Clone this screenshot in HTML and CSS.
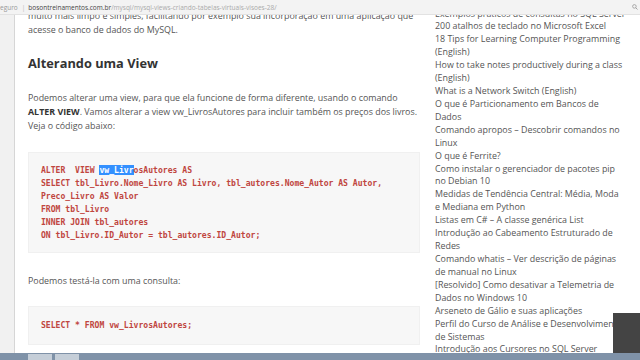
FILE: index.html
```html
<!DOCTYPE html>
<html lang="pt-BR">
<head>
<meta charset="utf-8">
<title>MySQL Views</title>
<link rel="stylesheet" href="styles.css">
</head>
<body>
<div class="addr">
  <span class="sec">eguro</span><span class="sep">|</span><span class="dom">bosontreinamentos.com.br</span><span class="path">/mysql/mysql-views-criando-tabelas-virtuais-visoes-28/</span>
  <svg class="search" width="6" height="6" viewBox="0 0 6 6"><circle cx="2.4" cy="2.4" r="1.8" fill="none" stroke="#999" stroke-width="0.8"/><path d="M3.7 3.7 L5.5 5.5" stroke="#999" stroke-width="0.9"/></svg>
</div>
<div class="page">
  <div class="gutter"></div>
  <main class="article">
    <p class="first">muito mais limpo e simples, facilitando por exemplo sua incorporação em uma aplicação que acesse o banco de dados do MySQL.</p>
    <h2>Alterando uma View</h2>
    <p class="intro">Podemos alterar uma view, para que ela funcione de forma diferente, usando o comando <b>ALTER VIEW</b>. Vamos alterar a view vw_LivrosAutores para incluir também os preços dos livros. Veja o código abaixo:</p>
    <pre class="code">ALTER  VIEW <span class="sel">vw_Livr</span>osAutores AS
SELECT tbl_Livro.Nome_Livro AS Livro, tbl_autores.Nome_Autor AS Autor,
Preco_Livro AS Valor
FROM tbl_Livro
INNER JOIN tbl_autores
ON tbl_Livro.ID_Autor = tbl_autores.ID_Autor;</pre>
    <p class="test">Podemos testá-la com uma consulta:</p>
    <pre class="code short">SELECT * FROM vw_LivrosAutores;</pre>
  </main>
  <aside class="side">
    <ul>
      <li>Exemplos práticos de consultas no SQL Server</li>
      <li>200 atalhos de teclado no Microsoft Excel</li>
      <li>18 Tips for Learning Computer Programming<br>(English)</li>
      <li>How to take notes productively during a class<br>(English)</li>
      <li>What is a Network Switch (English)</li>
      <li>O que é Particionamento em Bancos de<br>Dados</li>
      <li>Comando apropos – Descobrir comandos no<br>Linux</li>
      <li>O que é Ferrite?</li>
      <li>Como instalar o gerenciador de pacotes pip<br>no Debian 10</li>
      <li>Medidas de Tendência Central: Média, Moda<br>e Mediana em Python</li>
      <li>Listas em C# – A classe genérica List</li>
      <li>Introdução ao Cabeamento Estruturado de<br>Redes</li>
      <li>Comando whatis – Ver descrição de páginas<br>de manual no Linux</li>
      <li>[Resolvido] Como desativar a Telemetria de<br>Dados no Windows 10</li>
      <li>Arseneto de Gálio e suas aplicações</li>
      <li>Perfil do Curso de Análise e Desenvolvimento<br>de Sistemas</li>
      <li>Introdução aos Cursores no SQL Server</li>
    </ul>
  </aside>
  <div class="dark"></div>
</div>
<div class="taskbar"><span class="tab"></span><span class="tab"></span></div>
</body>
</html>
```
FILE: styles.css
```css
* { box-sizing: border-box; }
html, body { margin: 0; padding: 0; }
body {
  width: 640px;
  height: 360px;
  overflow: hidden;
  background: #fff;
  font-family: "Open Sans", "Liberation Sans", sans-serif;
  display: flex;
  flex-direction: column;
}
.addr {
  flex: 0 0 15px;
  background: #f3f3f3;
  border-bottom: 1px solid #e2e2e2;
  font-size: 6.5px;
  color: #aaa;
  white-space: nowrap;
  display: flex;
  align-items: center;
}
.addr .sec { color: #999; }
.addr .sep { color: #bbb; margin: 0 3px 0 4px; }
.addr .dom { color: #444; }
.addr .path { color: #aaa; }
.addr .search { margin-left: auto; margin-right: 2px; }
.page {
  flex: 1;
  display: flex;
  overflow: hidden;
  position: relative;
}
.gutter {
  flex: 0 0 15px;
  background: #f1f1f1;
  border-right: 1px solid #d6d6d6;
}
.article {
  flex: 0 0 405px;
  padding-left: 13px;
  color: #555;
  font-size: 8.9px;
  line-height: 14px;
}
.article p { margin: 0; }
.article .first { margin-top: -6px; }
.article h2 {
  font-size: 12.8px;
  font-weight: 700;
  color: #333;
  margin: 18px 0 0;
  line-height: 16px;
}
.article .intro { margin-top: 20px; }
.article b { color: #333; }
.code {
  margin: 19px 0 0;
  background: #f7f7f7;
  border: 1px solid #f0f0f0;
  padding: 11px 12px 10px;
  font-family: "DejaVu Sans Mono", "Liberation Mono", monospace;
  font-weight: 700;
  font-size: 8.1px;
  line-height: 13px;
  color: #c0463f;
  white-space: pre;
}
.sel { background: #3390ff; color: #fff; }
.article .test { margin-top: 21px; }
.code.short { margin-top: 18px; padding: 11.5px 12px 12.5px; }
.side {
  flex: 0 0 205px;
  padding-left: 15px;
  font-size: 8.9px;
  line-height: 12.92px;
  color: #555;
  white-space: nowrap;
  overflow: hidden;
}
.side ul { list-style: none; margin: -7.5px 0 0; padding: 0; }
.dark {
  position: absolute;
  right: 0;
  bottom: 0;
  width: 27px;
  height: 40px;
  background: #444;
}
.taskbar {
  flex: 0 0 7px;
  background: #7f92a8;
  display: flex;
  gap: 3px;
  padding-left: 28px;
  padding-top: 1px;
}
.tab { width: 24px; height: 6px; background: #c5ced8; }
```
